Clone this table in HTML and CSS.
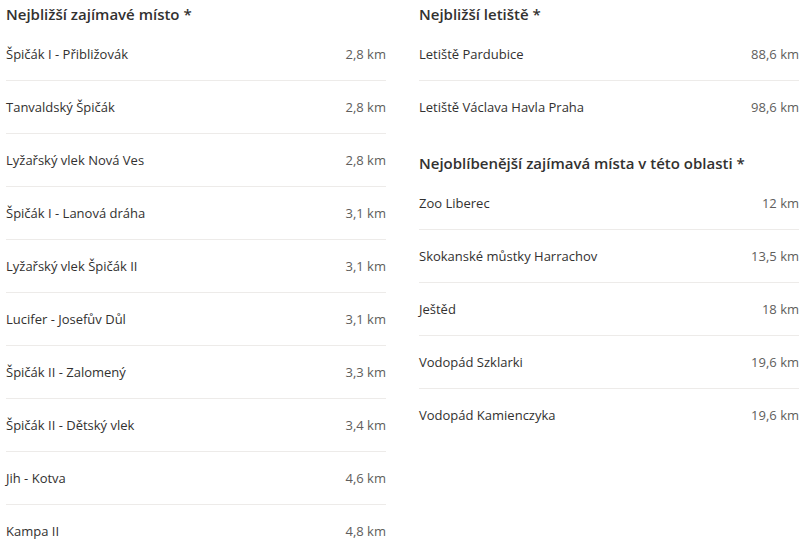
FILE: index.html
```html
<!DOCTYPE html>
<html lang="cs">
<head>
    <meta charset="UTF-8">
    <title>Okolí</title>
    <link rel="stylesheet" href="styles.css">
</head>
<body>
    <div class="nearby">
        <div class="nearby-col">
            <section class="nearby-section">
                <h3>Nejbližší zajímavé místo *</h3>
                <ul class="place-list">
                    <li><span class="place-name">Špičák I - Přibližovák</span><span class="place-dist">2,8 km</span></li>
                    <li><span class="place-name">Tanvaldský Špičák</span><span class="place-dist">2,8 km</span></li>
                    <li><span class="place-name">Lyžařský vlek Nová Ves</span><span class="place-dist">2,8 km</span></li>
                    <li><span class="place-name">Špičák I - Lanová dráha</span><span class="place-dist">3,1 km</span></li>
                    <li><span class="place-name">Lyžařský vlek Špičák II</span><span class="place-dist">3,1 km</span></li>
                    <li><span class="place-name">Lucifer - Josefův Důl</span><span class="place-dist">3,1 km</span></li>
                    <li><span class="place-name">Špičák II - Zalomený</span><span class="place-dist">3,3 km</span></li>
                    <li><span class="place-name">Špičák II - Dětský vlek</span><span class="place-dist">3,4 km</span></li>
                    <li><span class="place-name">Jih - Kotva</span><span class="place-dist">4,6 km</span></li>
                    <li><span class="place-name">Kampa II</span><span class="place-dist">4,8 km</span></li>
                </ul>
            </section>
        </div>
        <div class="nearby-col">
            <section class="nearby-section">
                <h3>Nejbližší letiště *</h3>
                <ul class="place-list">
                    <li><span class="place-name">Letiště Pardubice</span><span class="place-dist">88,6 km</span></li>
                    <li><span class="place-name">Letiště Václava Havla Praha</span><span class="place-dist">98,6 km</span></li>
                </ul>
            </section>
            <section class="nearby-section">
                <h3>Nejoblíbenější zajímavá místa v této oblasti *</h3>
                <ul class="place-list">
                    <li><span class="place-name">Zoo Liberec</span><span class="place-dist">12 km</span></li>
                    <li><span class="place-name">Skokanské můstky Harrachov</span><span class="place-dist">13,5 km</span></li>
                    <li><span class="place-name">Ještěd</span><span class="place-dist">18 km</span></li>
                    <li><span class="place-name">Vodopád Szklarki</span><span class="place-dist">19,6 km</span></li>
                    <li><span class="place-name">Vodopád Kamienczyka</span><span class="place-dist">19,6 km</span></li>
                </ul>
            </section>
        </div>
    </div>
</body>
</html>
```

FILE: styles.css
```css
body {
    margin: 0;
    font-family: 'Open Sans', 'Noto Sans', sans-serif;
    color: #323130;
    background-color: #fff;
}

.nearby {
    display: grid;
    grid-template-columns: 380px 380px;
    column-gap: 33px;
    padding-left: 6px;
}

.nearby-section + .nearby-section {
    margin-top: 16px;
}

.nearby-section h3 {
    margin: 0;
    height: 28px;
    line-height: 28px;
    font-size: 15px;
    font-weight: 600;
    color: #323130;
}

.place-list {
    list-style: none;
    margin: 0;
    padding: 0;
}

.place-list li {
    display: flex;
    justify-content: space-between;
    align-items: center;
    height: 52px;
    border-bottom: 1px solid #edebe9;
    font-size: 13px;
}

.place-list li:last-child {
    border-bottom: none;
}

.place-dist {
    color: #605e5c;
}
```
